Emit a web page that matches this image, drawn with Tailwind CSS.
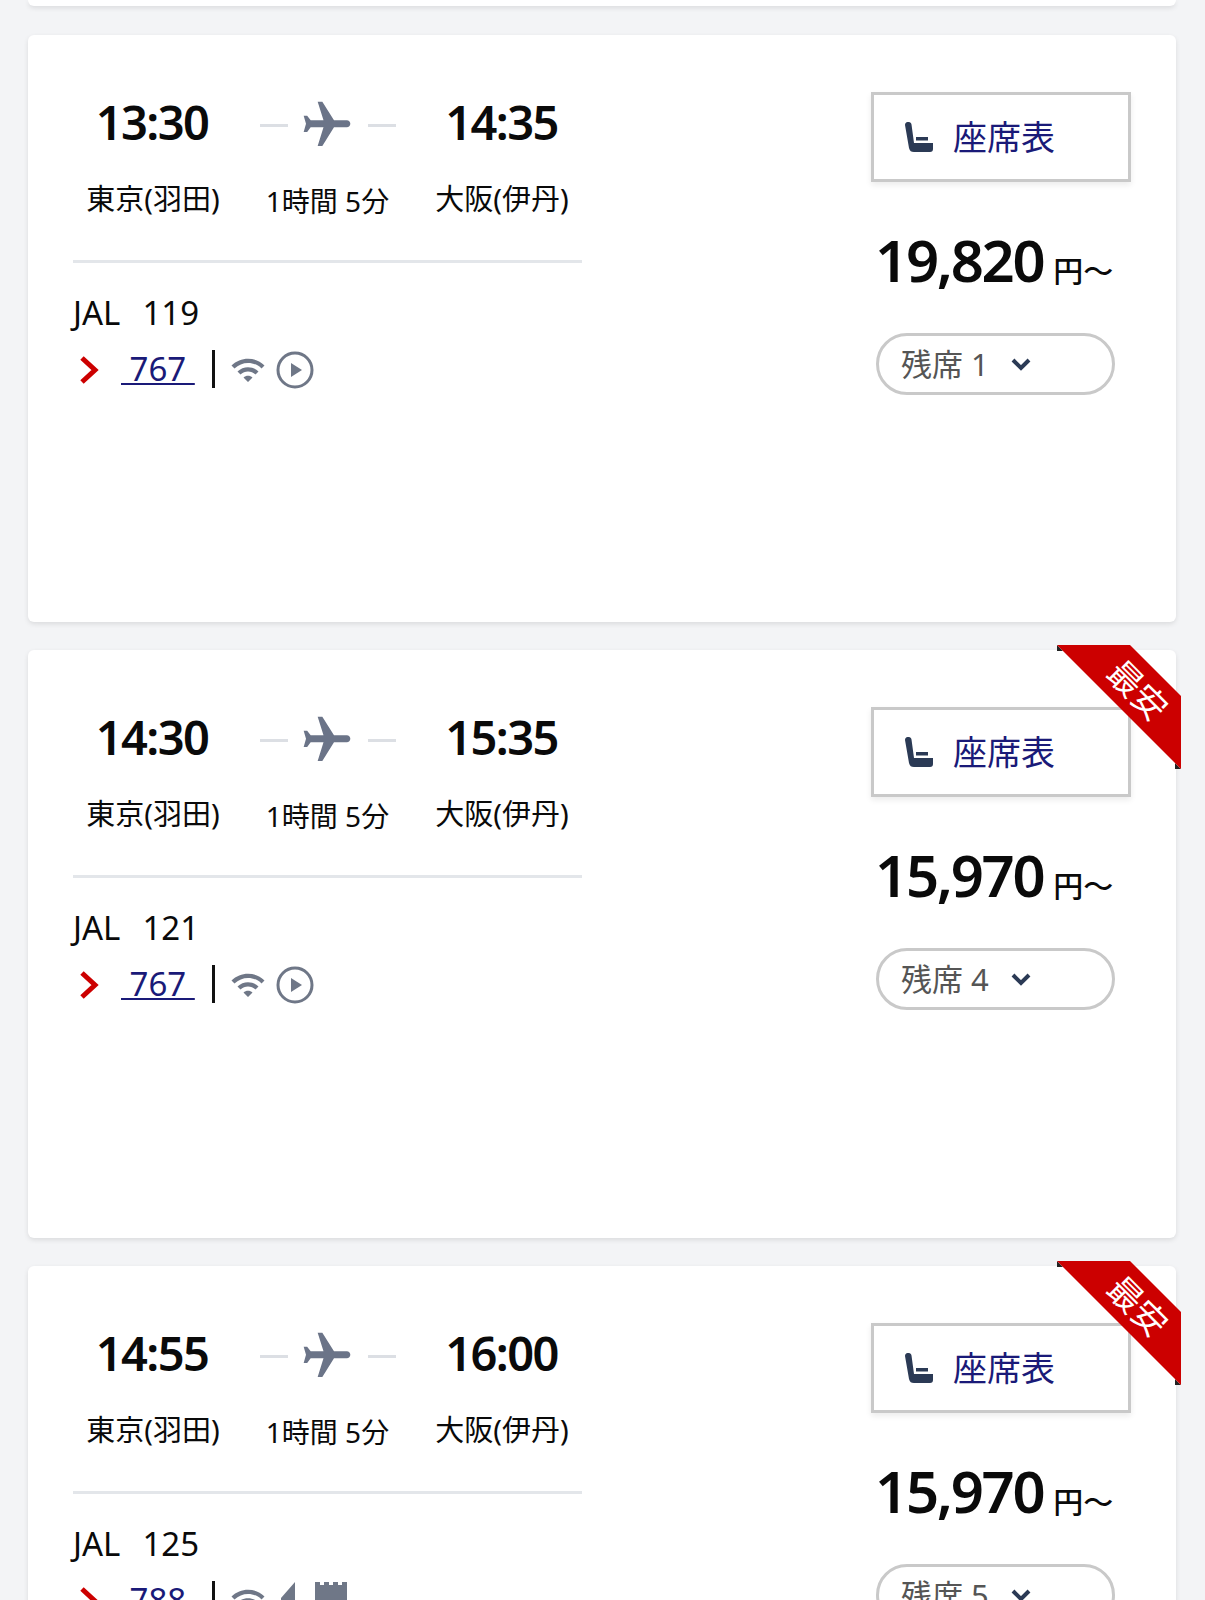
<!DOCTYPE html>
<html lang="ja">
<head>
  <meta charset="UTF-8" />
  <title>JAL フライト一覧</title>
  <script src="https://cdn.jsdelivr.net/npm/@tailwindcss/browser@4"></script>
</head>
<body class="bg-[#f3f4f6] font-['Noto_Sans','Noto_Sans_CJK_JP',sans-serif] text-[#0a0a0a]">
  <div class="h-[1600px] overflow-hidden pl-[28px] pr-[29px]">
    <div class="h-[6px] rounded-b-md bg-white shadow-[0_2px_5px_rgba(0,0,0,0.1)]"></div>

    <!-- 13:30 -->
    <section class="relative mt-[29px] flex h-[587px] justify-between rounded-md bg-white pl-[45px] pr-[45px] pt-[56px] shadow-[0_2px_5px_rgba(0,0,0,0.1)]">
      <div class="w-[509px]">
        <div class="-ml-[7px] flex h-[62px] w-[523px] items-center">
          <div class="w-[174px] pr-[2px] text-center text-[47px] font-semibold leading-none tracking-[-1.6px]">13:30</div>
          <div class="flex w-[175px] items-center justify-center pt-[6px]">
            <div class="h-[3px] w-[28px] bg-[#dcdfe4]"></div>
            <svg class="mx-[12px] h-[56px] w-[56px] -translate-x-[1px] rotate-90 fill-[#6b7488]" viewBox="0 0 24 24"><path d="M21 16v-2l-8-5V3.5c0-.83-.67-1.5-1.5-1.5S10 2.67 10 3.5V9l-8 5v2l8-2.5V19l-2 1.5V22l3.5-1 3.5 1v-1.5L13 19v-5.5l8 2.5z"/></svg>
            <div class="h-[3px] w-[28px] bg-[#dcdfe4]"></div>
          </div>
          <div class="w-[174px] pr-[1px] text-center text-[47px] font-semibold leading-none tracking-[-1.6px]">14:35</div>
        </div>
        <div class="-ml-[7px] mt-[25px] flex h-[40px] w-[523px] items-center text-[29px] leading-none">
          <div class="w-[174px] text-center">東京(羽田)</div>
          <div class="w-[175px] pt-[6px] text-center text-[28px]">1時間 5分</div>
          <div class="w-[174px] text-center">大阪(伊丹)</div>
        </div>
        <div class="mt-[42px] h-[3px] bg-[#e3e6ea]"></div>
        <div class="mt-[27px] flex h-[44px] items-center text-[33px] leading-none"><span>JAL</span><span class="ml-[22px]">119</span></div>
        <div class="mt-[13px] flex h-[44px] items-center">
          <svg class="ml-[6px] h-[30px] w-[20px] translate-y-[1px] fill-none stroke-[#cc0000] stroke-[5]" viewBox="0 0 20 30"><path d="M3 3l13 12L3 27"/></svg>
          <a class="ml-[22px] -translate-y-[1px] text-[33px] leading-none text-[#1a1a78] underline underline-offset-[2px] decoration-2 whitespace-pre"> 767 </a>
          <div class="ml-[17px] h-[38px] w-[3px] bg-[#111]"></div>
          <svg class="ml-[15px] h-[36px] w-[36px] translate-y-[1px] fill-[#6f7787]" viewBox="0 0 24 24"><path d="M1 9l2 2c4.97-4.97 13.03-4.97 18 0l2-2C16.93 2.93 7.08 2.93 1 9zm8 8l3 3 3-3c-1.65-1.66-4.34-1.66-6 0zm-4-4l2 2c2.76-2.76 7.24-2.76 10 0l2-2C15.14 9.14 8.87 9.14 5 13z"/></svg>
          <svg class="ml-[10px] h-[38px] w-[38px] translate-y-[1px]" viewBox="0 0 38 38"><circle cx="19" cy="19" r="17" fill="none" stroke="#6f7787" stroke-width="3"/><path d="M15 12l11 7-11 7z" fill="#6f7787"/></svg>
        </div>
      </div>
      <div class="w-[261px]">
        <button class="ml-[1px] mt-[1px] flex h-[90px] w-[260px] items-center border-[3px] border-[#c9c9c9] bg-white pl-[31px] shadow-[0_3px_6px_rgba(0,0,0,0.08)]">
          <svg class="h-[30px] w-[28px] fill-[#2b3a55]" viewBox="0 0 28 30"><path d="M0 3c0-4 6-4 6.5-.5L9 21h19v6c0 2-1 3-3 3H9c-3 0-4-1-5-4z"/><path d="M11 15h12v3.5H11z"/></svg>
          <span class="ml-[20px] text-[34px] leading-none text-[#1a1a78]">座席表</span>
        </button>
        <div class="mt-[49px] flex h-[70px] items-baseline pl-[5px] leading-none">
          <span class="text-[58px] font-semibold tracking-[-2.3px]">19,820</span>
          <span class="ml-[10px] text-[30px] font-medium">円～</span>
        </div>
        <div class="ml-[6px] mt-[32px] flex h-[62px] w-[239px] items-center rounded-full border-[3px] border-[#c9c9c9] pl-[22px] text-[31px] leading-none text-[#555]">
          <span>残席 1</span>
          <svg class="ml-[21px] h-[14px] w-[22px] fill-none stroke-[#2b3a55] stroke-[4]" viewBox="0 0 22 14"><path d="M3 3l8 8 8-8"/></svg>
        </div>
      </div>
    </section>

    <!-- 14:30 -->
    <section class="relative mt-[28px] flex h-[588px] justify-between rounded-md bg-white pl-[45px] pr-[45px] pt-[56px] shadow-[0_2px_5px_rgba(0,0,0,0.1)]">
      <div class="w-[509px]">
        <div class="-ml-[7px] flex h-[62px] w-[523px] items-center">
          <div class="w-[174px] pr-[2px] text-center text-[47px] font-semibold leading-none tracking-[-1.6px]">14:30</div>
          <div class="flex w-[175px] items-center justify-center pt-[6px]">
            <div class="h-[3px] w-[28px] bg-[#dcdfe4]"></div>
            <svg class="mx-[12px] h-[56px] w-[56px] -translate-x-[1px] rotate-90 fill-[#6b7488]" viewBox="0 0 24 24"><path d="M21 16v-2l-8-5V3.5c0-.83-.67-1.5-1.5-1.5S10 2.67 10 3.5V9l-8 5v2l8-2.5V19l-2 1.5V22l3.5-1 3.5 1v-1.5L13 19v-5.5l8 2.5z"/></svg>
            <div class="h-[3px] w-[28px] bg-[#dcdfe4]"></div>
          </div>
          <div class="w-[174px] pr-[1px] text-center text-[47px] font-semibold leading-none tracking-[-1.6px]">15:35</div>
        </div>
        <div class="-ml-[7px] mt-[25px] flex h-[40px] w-[523px] items-center text-[29px] leading-none">
          <div class="w-[174px] text-center">東京(羽田)</div>
          <div class="w-[175px] pt-[6px] text-center text-[28px]">1時間 5分</div>
          <div class="w-[174px] text-center">大阪(伊丹)</div>
        </div>
        <div class="mt-[42px] h-[3px] bg-[#e3e6ea]"></div>
        <div class="mt-[27px] flex h-[44px] items-center text-[33px] leading-none"><span>JAL</span><span class="ml-[22px]">121</span></div>
        <div class="mt-[13px] flex h-[44px] items-center">
          <svg class="ml-[6px] h-[30px] w-[20px] translate-y-[1px] fill-none stroke-[#cc0000] stroke-[5]" viewBox="0 0 20 30"><path d="M3 3l13 12L3 27"/></svg>
          <a class="ml-[22px] -translate-y-[1px] text-[33px] leading-none text-[#1a1a78] underline underline-offset-[2px] decoration-2 whitespace-pre"> 767 </a>
          <div class="ml-[17px] h-[38px] w-[3px] bg-[#111]"></div>
          <svg class="ml-[15px] h-[36px] w-[36px] translate-y-[1px] fill-[#6f7787]" viewBox="0 0 24 24"><path d="M1 9l2 2c4.97-4.97 13.03-4.97 18 0l2-2C16.93 2.93 7.08 2.93 1 9zm8 8l3 3 3-3c-1.65-1.66-4.34-1.66-6 0zm-4-4l2 2c2.76-2.76 7.24-2.76 10 0l2-2C15.14 9.14 8.87 9.14 5 13z"/></svg>
          <svg class="ml-[10px] h-[38px] w-[38px] translate-y-[1px]" viewBox="0 0 38 38"><circle cx="19" cy="19" r="17" fill="none" stroke="#6f7787" stroke-width="3"/><path d="M15 12l11 7-11 7z" fill="#6f7787"/></svg>
        </div>
      </div>
      <div class="w-[261px]">
        <button class="ml-[1px] mt-[1px] flex h-[90px] w-[260px] items-center border-[3px] border-[#c9c9c9] bg-white pl-[31px] shadow-[0_3px_6px_rgba(0,0,0,0.08)]">
          <svg class="h-[30px] w-[28px] fill-[#2b3a55]" viewBox="0 0 28 30"><path d="M0 3c0-4 6-4 6.5-.5L9 21h19v6c0 2-1 3-3 3H9c-3 0-4-1-5-4z"/><path d="M11 15h12v3.5H11z"/></svg>
          <span class="ml-[20px] text-[34px] leading-none text-[#1a1a78]">座席表</span>
        </button>
        <div class="mt-[49px] flex h-[70px] items-baseline pl-[5px] leading-none">
          <span class="text-[58px] font-semibold tracking-[-2.3px]">15,970</span>
          <span class="ml-[10px] text-[30px] font-medium">円～</span>
        </div>
        <div class="ml-[6px] mt-[32px] flex h-[62px] w-[239px] items-center rounded-full border-[3px] border-[#c9c9c9] pl-[22px] text-[31px] leading-none text-[#555]">
          <span>残席 4</span>
          <svg class="ml-[21px] h-[14px] w-[22px] fill-none stroke-[#2b3a55] stroke-[4]" viewBox="0 0 22 14"><path d="M3 3l8 8 8-8"/></svg>
        </div>
      </div>
      <!-- ribbon -->
      <svg class="absolute -right-[5px] -top-[5px] h-[124px] w-[124px]" viewBox="0 0 124 124">
        <path d="M0 0l6 6H0zM124 124l-6-6v6z" fill="#222"/>
        <path d="M0 0h73l51 51v73z" fill="#cc0000"/>
        <text x="81" y="45" fill="#fff" font-size="34" text-anchor="middle" dominant-baseline="central" transform="rotate(45 81 45)">最安</text>
      </svg>
    </section>

    <!-- 14:55 -->
    <section class="relative mt-[28px] flex h-[588px] justify-between rounded-md bg-white pl-[45px] pr-[45px] pt-[56px] shadow-[0_2px_5px_rgba(0,0,0,0.1)]">
      <div class="w-[509px]">
        <div class="-ml-[7px] flex h-[62px] w-[523px] items-center">
          <div class="w-[174px] pr-[2px] text-center text-[47px] font-semibold leading-none tracking-[-1.6px]">14:55</div>
          <div class="flex w-[175px] items-center justify-center pt-[6px]">
            <div class="h-[3px] w-[28px] bg-[#dcdfe4]"></div>
            <svg class="mx-[12px] h-[56px] w-[56px] -translate-x-[1px] rotate-90 fill-[#6b7488]" viewBox="0 0 24 24"><path d="M21 16v-2l-8-5V3.5c0-.83-.67-1.5-1.5-1.5S10 2.67 10 3.5V9l-8 5v2l8-2.5V19l-2 1.5V22l3.5-1 3.5 1v-1.5L13 19v-5.5l8 2.5z"/></svg>
            <div class="h-[3px] w-[28px] bg-[#dcdfe4]"></div>
          </div>
          <div class="w-[174px] pr-[1px] text-center text-[47px] font-semibold leading-none tracking-[-1.6px]">16:00</div>
        </div>
        <div class="-ml-[7px] mt-[25px] flex h-[40px] w-[523px] items-center text-[29px] leading-none">
          <div class="w-[174px] text-center">東京(羽田)</div>
          <div class="w-[175px] pt-[6px] text-center text-[28px]">1時間 5分</div>
          <div class="w-[174px] text-center">大阪(伊丹)</div>
        </div>
        <div class="mt-[42px] h-[3px] bg-[#e3e6ea]"></div>
        <div class="mt-[27px] flex h-[44px] items-center text-[33px] leading-none"><span>JAL</span><span class="ml-[22px]">125</span></div>
        <div class="mt-[13px] flex h-[44px] items-center">
          <svg class="ml-[6px] h-[30px] w-[20px] translate-y-[1px] fill-none stroke-[#cc0000] stroke-[5]" viewBox="0 0 20 30"><path d="M3 3l13 12L3 27"/></svg>
          <a class="ml-[22px] -translate-y-[1px] text-[33px] leading-none text-[#1a1a78] underline underline-offset-[2px] decoration-2 whitespace-pre"> 788 </a>
          <div class="ml-[17px] h-[38px] w-[3px] bg-[#111]"></div>
          <svg class="ml-[15px] h-[36px] w-[36px] translate-y-[1px] fill-[#6f7787]" viewBox="0 0 24 24"><path d="M1 9l2 2c4.97-4.97 13.03-4.97 18 0l2-2C16.93 2.93 7.08 2.93 1 9zm8 8l3 3 3-3c-1.65-1.66-4.34-1.66-6 0zm-4-4l2 2c2.76-2.76 7.24-2.76 10 0l2-2C15.14 9.14 8.87 9.14 5 13z"/></svg>
          <svg class="ml-[15px] h-[36px] w-[20px] fill-[#6f7787]" viewBox="0 0 20 36"><path d="M14 0v36H0V16z"/></svg>
          <svg class="ml-[14px] h-[36px] w-[32px] fill-[#6f7787]" viewBox="0 0 32 36"><path d="M0 0h5v3h4V0h5v3h4V0h5v3h4V0h5v36H0z"/></svg>
        </div>
      </div>
      <div class="w-[261px]">
        <button class="ml-[1px] mt-[1px] flex h-[90px] w-[260px] items-center border-[3px] border-[#c9c9c9] bg-white pl-[31px] shadow-[0_3px_6px_rgba(0,0,0,0.08)]">
          <svg class="h-[30px] w-[28px] fill-[#2b3a55]" viewBox="0 0 28 30"><path d="M0 3c0-4 6-4 6.5-.5L9 21h19v6c0 2-1 3-3 3H9c-3 0-4-1-5-4z"/><path d="M11 15h12v3.5H11z"/></svg>
          <span class="ml-[20px] text-[34px] leading-none text-[#1a1a78]">座席表</span>
        </button>
        <div class="mt-[49px] flex h-[70px] items-baseline pl-[5px] leading-none">
          <span class="text-[58px] font-semibold tracking-[-2.3px]">15,970</span>
          <span class="ml-[10px] text-[30px] font-medium">円～</span>
        </div>
        <div class="ml-[6px] mt-[32px] flex h-[62px] w-[239px] items-center rounded-full border-[3px] border-[#c9c9c9] pl-[22px] text-[31px] leading-none text-[#555]">
          <span>残席 5</span>
          <svg class="ml-[21px] h-[14px] w-[22px] fill-none stroke-[#2b3a55] stroke-[4]" viewBox="0 0 22 14"><path d="M3 3l8 8 8-8"/></svg>
        </div>
      </div>
      <svg class="absolute -right-[5px] -top-[5px] h-[124px] w-[124px]" viewBox="0 0 124 124">
        <path d="M0 0l6 6H0zM124 124l-6-6v6z" fill="#222"/>
        <path d="M0 0h73l51 51v73z" fill="#cc0000"/>
        <text x="81" y="45" fill="#fff" font-size="34" text-anchor="middle" dominant-baseline="central" transform="rotate(45 81 45)">最安</text>
      </svg>
    </section>
  </div>
</body>
</html>
